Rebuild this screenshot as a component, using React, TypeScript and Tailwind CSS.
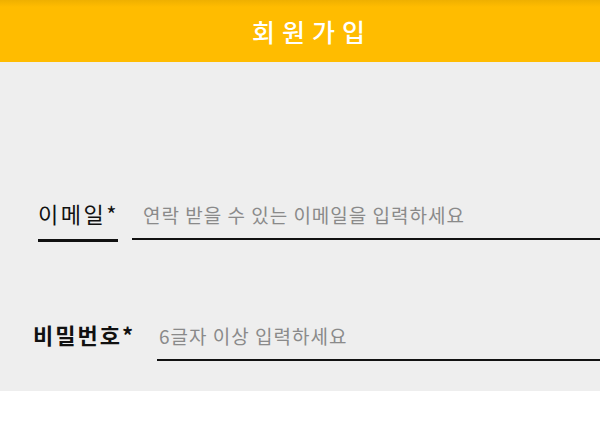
import React from "react";

export default function App() {
  const font = { fontFamily: '"Noto Sans CJK KR", "Noto Sans", sans-serif' };
  return (
    <div className="w-[600px] h-[433px] bg-white" style={font}>
      <header className="h-[62px] bg-[linear-gradient(to_bottom,#efb000,#ffbc00_7px)] flex items-center justify-center pl-[24px]">
        <h1 className="text-white text-[25px] font-medium tracking-[7px] leading-none">회원가입</h1>
      </header>
      <main className="bg-[#eeeeee] h-[329px] pt-[136px]">
        <div className="flex items-end pl-[38px]">
          <div className="flex flex-col w-[80px]">
            <span className="text-[22px] leading-[30px] tracking-[2.5px] text-[#111] whitespace-nowrap">이메일*</span>
            <span className="mt-[11px] h-[3px] bg-[#111] w-full" />
          </div>
          <div className="ml-[14px] flex-1 border-b-2 border-[#111] mb-[2px]">
            <input
              className="w-full bg-transparent outline-none pl-[11px] pb-[10px] text-[19px] tracking-[1px] leading-[26px] placeholder:text-[#8a8a8a]"
              placeholder="연락 받을 수 있는 이메일을 입력하세요"
            />
          </div>
        </div>
        <div className="flex items-end pl-[33px] mt-[77px]">
          <span className="text-[22px] leading-[30px] tracking-[2px] font-semibold text-[#111] whitespace-nowrap w-[100px] mb-[12px]">비밀번호*</span>
          <div className="ml-[24px] flex-1 border-b-[2px] border-[#111]">
            <input
              type="text"
              className="w-full bg-transparent outline-none pl-[2px] pb-[10px] text-[19px] tracking-[1px] leading-[26px] placeholder:text-[#8a8a8a]"
              placeholder="6글자 이상 입력하세요"
            />
          </div>
        </div>
      </main>
    </div>
  );
}
